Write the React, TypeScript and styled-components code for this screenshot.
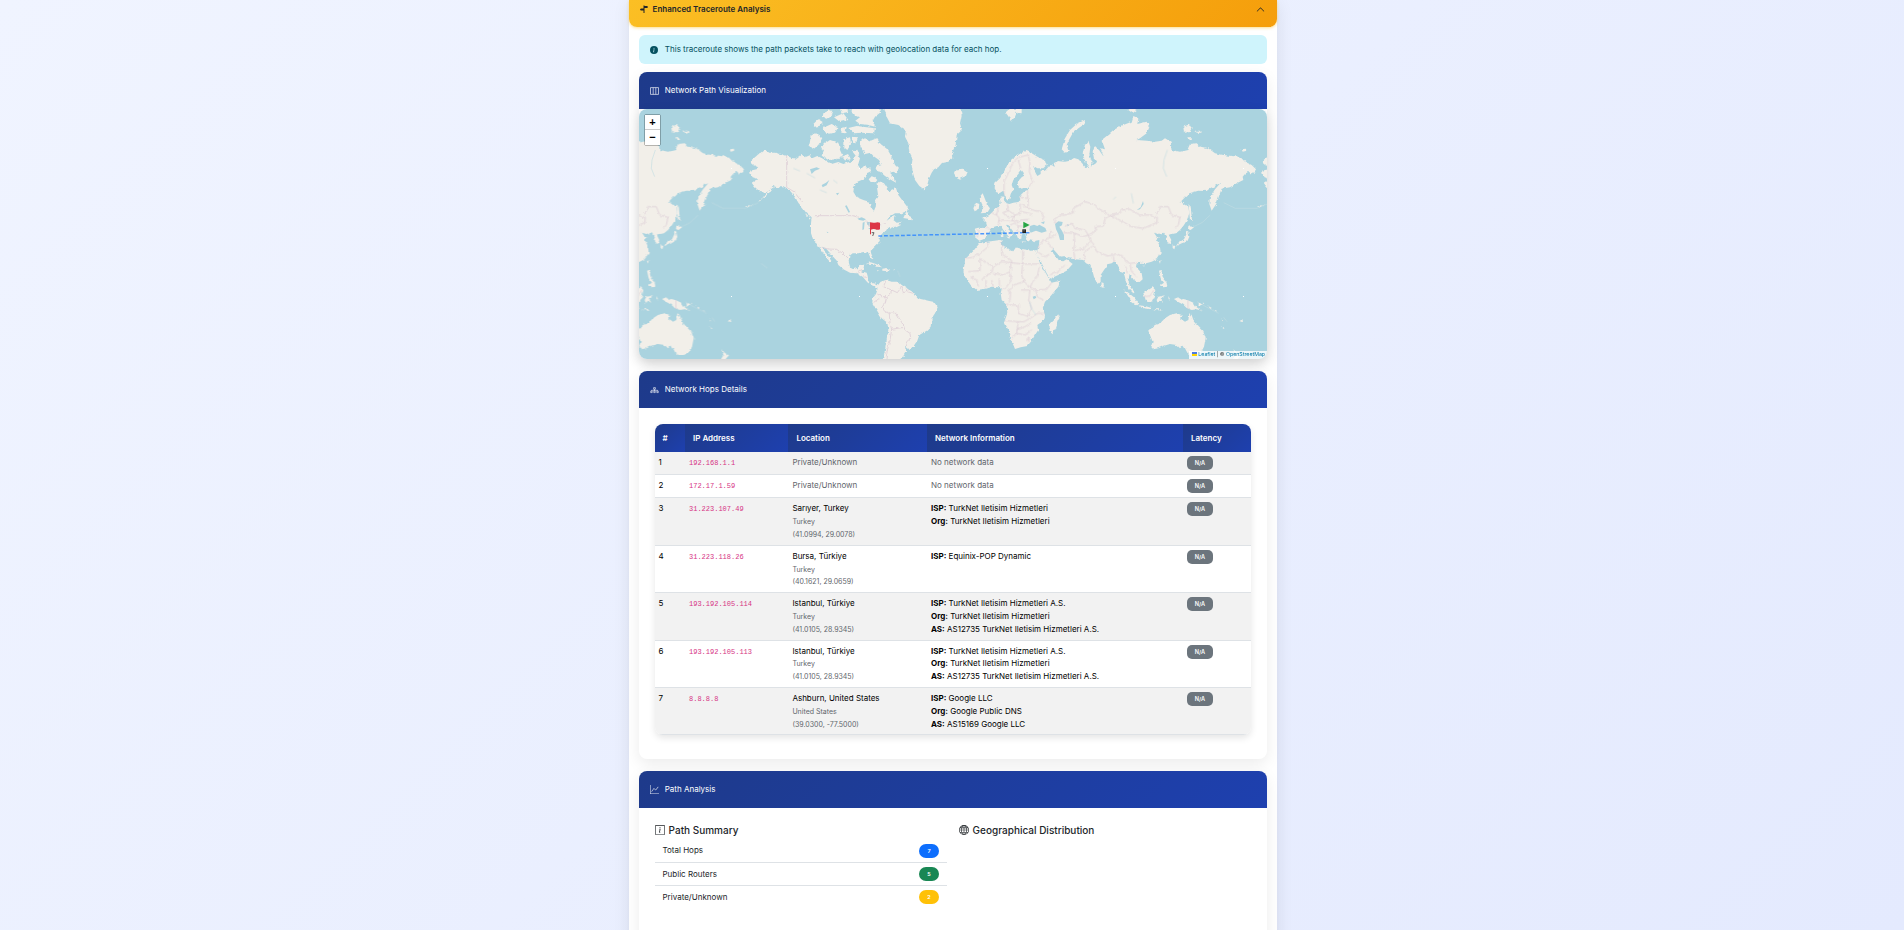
import React from "react";
import styled, { createGlobalStyle } from "styled-components";
import {
  BsChevronUp,
  BsGlobe,
  BsGraphUp,
  BsInfoCircleFill,
  BsInfoSquare,
  BsSignpostSplitFill,
} from "react-icons/bs";

const GlobalStyle = createGlobalStyle`
  *, *::before, *::after { box-sizing: border-box; }
  body {
    margin: 0;
    height: 930px;
    overflow: hidden;
    font-family: Inter, "Liberation Sans", sans-serif;
    font-size: 8px;
    line-height: 12.8px;
    color: #212529;
    background: #e9edfd;
  }
  h5, p { margin: 0; }
`;

const Page = styled.div`
  height: 930px;
  overflow: hidden;
  display: flex;
  justify-content: center;
  padding-left: 2px;
  background: linear-gradient(135deg, #f0f4ff 0%, #e4eafe 100%);
`;

const Panel = styled.main`
  width: 648px;
  height: 960px;
  background: #fff;
  box-shadow: 0 4px 16px rgba(0, 0, 0, 0.09);
`;

const PanelHeader = styled.header`
  height: 27px;
  padding: 0 12.5px 9px 11px;
  display: flex;
  align-items: center;
  border-radius: 0 0 8px 8px;
  background: linear-gradient(135deg, #fbbf24 0%, #f59e0b 100%);
  box-shadow: 0 1px 3px rgba(251, 191, 36, 0.5);
  font-weight: 600;
`;

const PanelTitle = styled.span`
  flex: 1;
  margin-left: 4.6px;
`;

const PanelBody = styled.div`
  padding: 8px 10px 0;
`;

const Notice = styled.div`
  height: 29px;
  padding: 0 11px;
  display: flex;
  align-items: center;
  gap: 6.8px;
  border-radius: 6px;
  background: #cff4fc;
  color: #055160;
`;

const Card = styled.section<{ $height: number; $first?: boolean }>`
  height: ${(p) => p.$height}px;
  border-radius: 8px;
  background: #fff;
  box-shadow: 0 5px 15px rgba(0, 0, 0, 0.08);
  margin-top: ${(p) => (p.$first ? 8 : 12)}px;
`;

const CardHeader = styled.div`
  height: 37px;
  padding: 0 11px;
  display: flex;
  align-items: center;
  gap: 5.7px;
  border-radius: 8px 8px 0 0;
  background: linear-gradient(135deg, #1e3a8a 0%, #1e40af 100%);
  color: #fff;

  svg {
    opacity: 0.85;
  }
`;

const CardBody = styled.div`
  padding: 16px;
`;

const MapFrame = styled.div`
  position: relative;
  height: 250px;
  overflow: hidden;
  border-radius: 8px;
  background: #aad3df;
`;

const MapShadow = styled.div`
  border-radius: 8px;
  box-shadow: 0 4px 12px rgba(0, 0, 0, 0.13);
`;

const MapDrawing = styled.svg`
  display: block;
  width: 628px;
  height: 250px;
`;

const ZoomControl = styled.div`
  position: absolute;
  top: 5px;
  left: 5px;
  width: 17px;
  border: 1px solid rgba(0, 0, 0, 0.25);
  border-radius: 2px;
  background-clip: padding-box;
`;

const ZoomButton = styled.div`
  height: 14px;
  background: #fff;
  color: #000;
  text-align: center;
  font: bold 11px/15px "Liberation Sans", sans-serif;

  & + & {
    height: 16px;
    border-top: 1px solid #ccc;
    line-height: 14px;
  }
`;

const Attribution = styled.div`
  position: absolute;
  right: 0;
  bottom: 0;
  width: 78px;
  height: 8px;
  padding: 0 3px 2px;
  display: flex;
  align-items: center;
  gap: 1.3px;
  background: rgba(255, 255, 255, 0.8);
  color: #333;
  font: 5.25px/6px Inter, sans-serif;
  white-space: nowrap;
`;

const MapLink = styled.span`
  color: #0078a8;
`;

const UkraineFlag = styled.i`
  width: 5px;
  height: 4px;
  flex: none;
  background: linear-gradient(#4c7be1 50%, #ffd500 50%);
`;

const HopTable = styled.table`
  width: 596px;
  table-layout: fixed;
  border-spacing: 0;
  border-radius: 8px;
  overflow: hidden;
  box-shadow: 0 3px 7px rgba(0, 0, 0, 0.1);
`;

const HeadCell = styled.th<{ $width: number }>`
  width: ${(p) => p.$width}px;
  height: 28.2px;
  padding: 0 0 0 8px;
  text-align: left;
  font-weight: 600;
  color: #fff;
  background: linear-gradient(135deg, #1e3a8a 0%, #1e40af 100%);

  &:first-child {
    padding-left: 7.5px;
  }
`;

const HopRow = styled.tr<{ $tall: boolean }>`
  height: ${(p) => (p.$tall ? 47.4 : 23.1)}px;

  &:nth-child(odd) {
    background: #f2f2f2;
  }
`;

const Cell = styled.td`
  padding: 4px 4px 0;
  vertical-align: top;
  border-bottom: 1px solid #dee2e6;
  color: #000;
  white-space: nowrap;

  &:first-child {
    padding-left: 3.4px;
  }
`;

const Address = styled.code`
  font-family: "Liberation Mono", monospace;
  font-size: 7px;
  color: #d63384;
`;

const Muted = styled.span`
  color: #5f666c;
`;

const Line = styled.div`
  height: 12.8px;
`;

const SmallLine = styled(Line)`
  font-size: 7px;
  line-height: 14px;
  color: #5f666c;
`;

const LatencyBadge = styled.div`
  width: 26px;
  height: 14px;
  border-radius: 5px;
  background: #6c757d;
  color: #fff;
  text-align: center;
  font-size: 5.6px;
  font-weight: 600;
  line-height: 14px;
`;

const Columns = styled.div`
  display: grid;
  grid-template-columns: 292px 292px;
  gap: 12px;
`;

const Heading = styled.h5`
  display: flex;
  align-items: center;
  gap: 4px;
  height: 12px;
  margin: 0 0 3.4px -0.4px;
  font-size: 10px;
  font-weight: 500;
  line-height: 12px;
`;

const StatRow = styled.div`
  height: 23px;
  padding: 0 8px 0 7.5px;
  display: flex;
  align-items: center;
  justify-content: space-between;

  & + & {
    border-top: 1px solid #dee2e6;
  }
`;

const CountBadge = styled.span<{ $color: string }>`
  width: 20px;
  height: 14px;
  border-radius: 7px;
  background: ${(p) => p.$color};
  color: #fff;
  text-align: center;
  font-size: 5.4px;
  font-weight: 600;
  line-height: 14px;
`;

const MapIcon = () => (
  <svg width="9" height="8" viewBox="0 0 9 8" fill="none" stroke="currentColor" strokeWidth="0.75">
    <path d="M0.5,0.6 H8.5 V7.4 H0.5Z M3.2,0.6 V7.4 M5.8,0.6 V7.4" />
  </svg>
);

const HopsIcon = () => (
  <svg width="9" height="8" viewBox="0 0 9 8" fill="none" stroke="currentColor" strokeWidth="0.7">
    <path d="M3.6,1.6 h1.8 v1.6 h-1.8Z M4.5,3.2 V5 M1.4,5 V4.3 H7.6 V5 M0.7,5.2 h1.5 v1.4 h-1.5Z M3.75,5.2 h1.5 v1.4 h-1.5Z M6.8,5.2 h1.5 v1.4 h-1.5Z" />
  </svg>
);

interface Hop {
  ip: string;
  place?: string[];
  info?: [string, string][];
}

const turknet = "TurkNet Iletisim Hizmetleri";

const hops: Hop[] = [
  { ip: "192.168.1.1" },
  { ip: "172.17.1.59" },
  {
    ip: "31.223.107.49",
    place: ["Sarıyer, Turkey", "Turkey", "(41.0994, 29.0078)"],
    info: [["ISP:", turknet], ["Org:", turknet]],
  },
  {
    ip: "31.223.118.26",
    place: ["Bursa, Türkiye", "Turkey", "(40.1621, 29.0659)"],
    info: [["ISP:", "Equinix-POP Dynamic"]],
  },
  {
    ip: "193.192.105.114",
    place: ["Istanbul, Türkiye", "Turkey", "(41.0105, 28.9345)"],
    info: [["ISP:", `${turknet} A.S.`], ["Org:", turknet], ["AS:", `AS12735 ${turknet} A.S.`]],
  },
  {
    ip: "193.192.105.113",
    place: ["Istanbul, Türkiye", "Turkey", "(41.0105, 28.9345)"],
    info: [["ISP:", `${turknet} A.S.`], ["Org:", turknet], ["AS:", `AS12735 ${turknet} A.S.`]],
  },
  {
    ip: "8.8.8.8",
    place: ["Ashburn, United States", "United States", "(39.0300, -77.5000)"],
    info: [["ISP:", "Google LLC"], ["Org:", "Google Public DNS"], ["AS:", "AS15169 Google LLC"]],
  },
];

const columns: [string, number][] = [
  ["#", 30],
  ["IP Address", 103.4],
  ["Location", 138.6],
  ["Network Information", 256],
  ["Latency", 68],
];

/* One world copy is 1536 units wide; three units make one screen pixel. */
const WORLD = 1536;

const americas = [
  // mainland North America
  "M358,185 L375,172 385,163 395,158 405,150 418,158 435,158 455,163 470,167 485,174 500,176 515,165 525,172 540,166 548,174 562,168 575,174 590,182 605,192 625,186 640,192 655,187 668,182 680,165 690,175 684,195 692,208 705,195 715,210 708,232 695,240 682,245 672,262 670,275 680,292 700,300 718,305 722,322 732,332 738,318 735,305 745,290 742,270 740,252 748,244 762,250 770,262 778,275 790,270 797,262 805,285 820,305 833,322 832,332 815,340 795,340 778,350 770,362 785,352 795,348 790,360 800,368 815,366 800,378 785,384 775,380 768,392 755,402 748,415 750,425 740,435 730,445 722,452 724,462 730,475 726,478 720,470 715,458 700,456 685,460 668,460 658,468 656,485 660,500 672,508 684,504 688,495 703,494 700,508 694,514 710,518 714,532 714,542 722,550 735,550 745,556 740,562 725,556 712,547 698,530 680,520 660,518 640,508 625,495 620,482 605,465 590,448 578,440 584,454 596,470 606,486 600,486 584,466 570,445 562,430 550,420 543,400 543,370 545,352 530,340 518,325 505,308 495,290 480,272 460,262 440,262 430,255 420,268 405,278 390,275 375,262 365,248 378,240 388,238 368,232 362,222 360,212 380,208 385,200 370,196Z",
  // Aleutians
  "M440,258 L425,268 415,282 395,297 412,276 425,262Z M385,303 l12,-6 -8,7Z M345,322 l25,-10 -20,11Z",
  // South America
  "M742,558 L752,545 768,540 785,545 805,545 815,555 835,568 852,578 862,595 885,600 912,606 923,622 915,640 905,655 902,680 890,692 868,705 862,722 848,742 835,748 825,740 828,755 820,768 808,780 758,780 765,750 770,720 775,690 772,668 755,655 740,630 727,608 728,595 738,582 742,570Z",
  // Greenland
  "M762,20 L990,20 995,45 990,70 996,90 980,105 977,135 965,160 967,175 955,185 935,190 925,202 912,208 905,218 897,235 890,262 882,268 868,258 855,240 848,215 845,195 848,175 838,155 835,130 825,110 828,90 805,75 780,70 770,50Z",
  // Arctic islands
  "M690,122 L705,115 722,122 740,115 752,132 772,148 785,170 795,195 808,208 800,220 790,215 780,218 795,235 798,248 780,238 765,228 750,215 735,212 740,198 755,195 747,180 730,168 722,158 705,162 692,142Z",
  "M582,132 L600,120 625,128 630,150 638,168 620,178 595,180 575,167 582,150 572,145Z",
  "M542,108 L555,100 577,114 565,135 550,148 538,135Z",
  "M640,118 L660,112 663,132 652,150 640,140Z M668,110 L684,112 678,130 668,128Z M636,170 l18,-8 8,14 -16,6Z M668,155 l14,-6 6,14 -10,6Z",
  "M655,84 L680,78 735,85 732,100 695,98 672,100Z",
  "M658,27 L748,20 750,38 735,50 728,62 735,80 712,74 690,72 676,62 690,52 675,45Z",
  "M550,72 L565,58 578,66 568,78 552,80Z M578,84 L605,72 625,82 615,98 590,102Z M580,40 L600,30 608,42 590,56 578,52Z M612,52 L640,40 655,60 630,66Z M632,84 L650,80 646,100 634,98Z M630,28 l22,-4 2,12 -18,4Z",
  "M716,238 L728,226 742,240 735,250 722,246Z M706,208 l14,-6 4,14 -12,6Z",
  // Newfoundland, Vancouver
  "M820,354 L828,336 836,338 838,348 845,352 845,361 834,356Z M526,340 l14,12 2,6 -14,-12Z M795,378 l14,-6 4,3 -14,7Z",
  // Caribbean
  "M708,491 L722,487 740,493 757,502 742,500 725,492Z M757,506 L772,504 781,510 768,513 757,512Z M738,510 l10,2 -8,2Z M789,508 l8,1 -7,2Z",
];

const oldWorld = [
  // Eurasia
  "M75,412 L78,398 74,386 85,383 108,384 111,378 108,366 100,358 95,352 108,350 118,345 125,338 135,328 148,318 152,310 150,298 152,290 160,288 162,300 165,308 178,312 190,308 205,306 212,300 208,290 215,282 222,275 235,268 232,262 212,266 205,262 203,245 215,232 222,220 215,210 205,222 190,240 185,255 190,268 182,282 178,298 170,302 165,290 160,272 148,280 138,276 134,262 136,248 150,235 162,215 172,195 185,178 200,168 215,158 230,153 245,160 265,172 285,180 290,195 280,205 262,205 250,198 255,215 262,228 272,222 272,212 285,212 300,195 315,200 310,190 325,183 345,185 360,182 372,174 385,178 395,188 408,203 418,205 408,190 398,160 405,135 415,122 421,140 418,165 428,190 422,200 440,188 432,175 428,155 435,138 447,150 462,172 450,145 465,148 455,120 470,108 490,90 520,75 545,65 550,48 565,55 562,72 590,65 598,82 590,100 570,115 560,120 590,122 615,125 635,122 645,115 662,125 665,150 690,155 712,150 720,132 740,130 752,140 775,145 795,160 820,165 845,168 870,170 885,185 905,195 918,208 910,222 895,215 885,222 878,230 880,240 860,250 840,262 815,266 808,285 800,310 785,332 778,312 780,290 795,268 812,248 800,255 780,265 770,273 745,272 718,280 705,292 692,305 705,315 715,320 718,340 710,362 700,378 690,390 678,400 656,404 664,420 660,432 652,430 650,412 640,398 625,402 612,398 620,410 630,412 620,418 630,440 632,460 620,478 605,485 588,490 575,488 560,490 558,500 575,520 578,538 565,550 555,545 545,530 536,522 533,535 540,560 554,576 550,580 535,565 528,545 522,520 510,515 505,498 495,482 485,490 475,492 462,510 452,525 452,545 443,555 432,530 425,505 420,495 408,490 400,480 375,478 355,475 345,468 330,470 310,448 302,450 318,470 328,482 340,484 350,478 368,492 350,512 325,525 300,536 290,520 275,490 260,465 263,448 267,434 268,420 250,424 232,420 226,404 232,396 222,398 215,404 214,416 205,418 200,405 188,392 175,375 168,374 175,388 188,400 180,412 172,405 160,390 152,378 140,378 128,382 118,395 108,412 100,418 88,422Z",
  // Africa
  "M90,428 L112,425 150,420 157,422 152,438 170,445 190,454 198,442 218,448 245,452 262,450 260,462 270,490 285,515 298,538 305,548 330,542 325,560 300,590 285,605 278,625 285,645 283,660 262,675 265,690 255,705 245,722 232,738 212,742 195,747 190,735 180,715 175,690 163,665 172,640 170,615 155,600 152,580 155,568 145,562 125,560 105,566 80,570 62,555 45,530 40,515 44,490 48,475 68,455 80,440Z",
  "M325,643 L328,655 318,685 308,702 298,695 300,670 312,658Z",
  // British Isles, Iceland, Svalbard
  "M88,292 L98,280 104,295 112,315 120,325 112,338 92,340 102,325 95,310Z M70,325 L78,308 88,312 86,328 74,334Z",
  "M12,220 L22,208 40,206 53,215 48,228 30,236 18,230Z",
  "M165,35 L185,26 215,26 215,40 200,38 195,50 183,65 176,50Z",
  // Novaya Zemlya and the Arctic coast
  "M335,148 L345,115 360,90 380,72 405,60 404,72 385,85 368,100 358,118 350,135 356,155 345,158Z",
  "M535,30 L545,22 560,30 548,40Z M700,80 L715,74 728,84 722,96 702,98Z M732,92 l20,0 3,6 -14,0Z M712,112 l10,0 4,8 -10,0Z M875,148 l12,-2 3,6 -12,3Z",
  // Mediterranean islands
  "M152,405 l8,-2 0,8 -7,0Z M153,393 l5,-2 -1,9Z M168,410 l12,0 -2,6Z M212,424 l14,1 -8,3Z M248,424 l10,-3 -5,6Z",
  // Indian Ocean and Indonesia
  "M455,545 L462,555 460,563 454,562Z M520,567 L535,578 552,592 565,610 560,616 545,605 532,585Z M562,616 L585,618 605,624 602,628 580,624Z M580,580 L595,570 608,562 616,570 612,590 605,605 588,602Z",
  "M625,590 L645,586 632,596 640,608 628,602 624,612 620,600Z M610,628 l20,0 8,3 -20,0Z M655,588 l5,10 -4,0Z",
  "M672,597 L685,592 690,600 700,597 712,600 730,608 738,620 755,632 740,628 725,630 710,624 700,614 685,606Z M745,612 l15,-4 3,2 -14,7Z M775,615 l10,8 -4,0Z M790,626 l12,8 -4,0Z M815,655 l6,8 -4,0Z M868,663 l12,-5 -4,8Z M812,678 l12,8 -4,0Z",
  "M627,512 L634,510 638,530 650,545 652,560 640,562 632,555 642,548 632,535Z M627,484 l5,-3 -2,10Z M577,494 l8,0 -3,6Z",
  // Australia and New Zealand
  "M598,688 L615,675 632,668 645,655 660,645 680,640 695,645 690,655 705,665 715,660 718,640 725,645 732,665 745,680 760,695 767,715 762,740 750,762 735,765 722,765 712,758 705,745 700,736 690,745 680,735 660,732 640,738 625,745 610,748 603,740 608,725 600,705Z",
  "M850,748 L862,760 873,766 860,780 850,780 858,768Z",
  // Sakhalin and Japan
  "M716,314 L722,316 724,340 726,362 720,360 718,340Z M715,378 L722,375 732,382 722,390 714,388Z M714,392 L718,410 712,424 695,430 678,438 685,428 702,418Z M668,436 l8,2 -3,10 -5,-4Z",
];

const oldWorldWaters = [
  // Black Sea, Azov, Caspian, Aral, Baikal
  "M240,378 L252,374 262,378 268,374 286,384 290,394 275,398 258,392 242,398 238,390Z M272,368 l12,-4 -2,8Z",
  "M315,372 L325,364 338,366 336,376 328,380 336,392 342,405 342,420 330,420 325,402 318,388Z",
  "M352,372 l5,4 -4,3Z M560,330 L572,322 579,303 581,312 570,328Z",
  // Lake Victoria
  "M248,590 l8,-3 3,6 -8,5Z",
];

const americanWaters = [
  // Great Lakes
  "M682,356 L695,352 708,358 700,362 688,360Z M698,368 L704,365 702,388 697,390Z M710,366 L720,366 718,378 712,374Z M714,386 l18,-8 3,3 -14,7Z M730,374 l12,-3 -3,5Z",
  // Canadian lakes
  "M540,208 L560,202 570,206 555,212 545,222Z M575,255 L588,248 598,240 590,256 578,262Z M645,318 L650,316 660,336 656,338Z M618,280 l10,-2 -6,8Z M590,395 l6,2 -4,2Z",
];

const borders = [
  // North America
  "M470,167 L470,262 480,268 492,275 505,292 518,306 M550,347 L668,347 685,352 M710,362 L722,385 745,375 768,372 M575,442 L595,447 620,448 635,458 652,475 M680,518 L690,510 700,516 M700,530 L712,532",
  // South America
  "M768,542 L760,560 785,570 782,582 770,590 M785,570 L802,578 815,560 M815,560 L820,578 832,575 835,568 M832,575 L850,580 M742,582 L755,590 770,590 765,610 755,622 765,635 778,640 795,638 808,655 820,675 825,690 840,700 842,715 830,725 826,738 M778,640 L780,670 785,688 780,720 772,750 768,777 M785,688 L820,682 M730,608 L748,595",
];

const oldBorders = [
  // Africa
  "M112,425 L115,440 90,460 68,472 48,475 M90,475 L130,500 155,485 218,492 268,492 M90,475 L90,512 55,515 M130,500 L125,520 108,525 95,540 M155,425 L155,462 185,482 M218,450 L218,492 M218,492 L215,525 222,545 240,562 M185,482 L180,515 160,525 130,520 M180,515 L185,540 168,562 158,568 M222,545 L190,555 180,570 M268,500 L262,530 248,545 240,562 258,570 290,568 305,548 M258,570 L262,590 280,600 M172,570 L182,575 180,600 170,612 M215,570 L240,570 236,600 245,625 235,650 205,640 205,615 172,615 M165,662 L205,665 222,665 240,655 262,640 285,640 M205,665 L200,700 185,715 M200,690 L225,680 245,668 M200,700 L225,705 245,690 M125,540 L130,560 M108,540 L108,562 M62,530 L80,540 85,560 M148,535 L148,560 M230,720 l8,-6 -2,10 -6,-2",
  // Europe
  "M85,388 L82,412 M110,384 L125,388 M125,338 L140,345 148,355 145,370 150,376 M145,322 L140,345 M172,312 L175,332 158,338 170,350 M175,332 L195,345 212,340 210,312 M170,350 L195,350 M195,345 L188,362 205,368 212,360 238,358 M212,312 L235,325 248,330 M215,335 L245,342 M248,330 L272,335 282,350 275,362 M145,362 L160,360 172,360 188,362 M180,375 L195,370 205,378 232,380 M205,378 L200,392 212,398 M162,285 L162,245 172,225 190,185 205,172 222,168 235,165 M235,165 L240,190 238,215 248,245 235,262 M208,292 L232,295 M232,270 L235,325 M205,180 L212,205",
  // Asia
  "M310,360 L330,345 345,345 370,338 370,325 405,305 428,312 445,325 470,340 480,348 M312,358 L318,370 M345,378 L365,370 375,385 405,390 415,405 440,392 435,380 460,378 465,355 482,346 M482,346 L505,358 545,380 580,385 620,368 622,355 605,345 570,345 540,328 515,330 505,342 482,346 M620,345 L630,320 655,320 665,345 690,352 685,375 675,385 M415,405 L420,420 430,432 440,455 475,468 500,462 520,470 528,485 540,490 560,488 M340,398 L375,400 400,410 415,405 M372,400 L375,430 370,452 375,478 M375,452 L402,445 420,425 M405,478 L400,458 428,438 M262,445 L280,420 305,412 320,402 M285,420 L312,448 M262,455 L285,470 300,462 M298,412 L300,395 310,395 M300,525 L330,510 345,495 M490,468 L492,485 M540,492 L545,515 560,530 M528,500 L532,520 M582,590 L600,588 612,570 M714,600 L714,628",
];

const Shapes = ({ paths }: { paths: string[] }) => (
  <>
    {paths.map((d) => (
      <path key={d} d={d} />
    ))}
  </>
);

const World = () => (
  <g id="world">
    <g fill="#f2efe9" filter="url(#coast)">
      <Shapes paths={americas} />
      <g transform="translate(960 0)">
        <Shapes paths={oldWorld} />
      </g>
    </g>
    <g fill="#aad3df">
      <Shapes paths={americanWaters} />
      <g transform="translate(960 0)">
        <Shapes paths={oldWorldWaters} />
      </g>
    </g>
    <g fill="none" stroke="#d6c3d0" strokeOpacity="0.6" strokeWidth="3" strokeLinejoin="round" filter="url(#coast)">
      <Shapes paths={borders} />
      <g transform="translate(960 0)">
        <Shapes paths={oldBorders} />
      </g>
    </g>
    <path
      d="M1612,150 L1602,180 1600,205 1610,230 M1199,605 L1204,625 1218,645 M490,205 l20,8 M530,220 l25,14 M570,270 l20,8 M610,240 l12,10 M1450,298 l8,-8 M1504,280 l6,30"
      fill="none"
      stroke="#aad3df"
      strokeWidth="2"
      strokeOpacity="0.6"
    />
    <path
      d="M245,308 L280,325 345,325 385,308 M155,380 L180,368 205,345 M165,605 L195,622 230,640 M245,652 L255,665 M393,490 L412,504 M803,512 L810,530"
      fill="none"
      stroke="#f2efe9"
      strokeWidth="2"
      strokeOpacity="0.3"
    />
  </g>
);

const PathMap = () => (
  <MapDrawing viewBox="27 27 1884 750" preserveAspectRatio="none">
    <defs>
      <filter id="coast" x="-5%" y="-5%" width="110%" height="110%">
        <feTurbulence type="fractalNoise" baseFrequency="0.09" numOctaves="2" seed="4" />
        <feDisplacementMap in="SourceGraphic" scale="10" xChannelSelector="R" yChannelSelector="G" />
      </filter>
    </defs>
    <World />
    <use href="#world" x={-WORLD} />
    <use href="#world" x={WORLD} />
    <g fill="#fff">
      {[304, 688, 1072, 1456, 1840].map((x) => (
        <React.Fragment key={x}>
          <rect x={x - 1} y="204" width="3" height="3" />
          <rect x={x - 1} y="588" width="3" height="3" />
        </React.Fragment>
      ))}
    </g>
    <path
      d="M745,408 L1196,398 1196,404"
      fill="none"
      stroke="#3388ff"
      strokeWidth="4.5"
      strokeOpacity="0.85"
      strokeDasharray="11.5 5.5"
    />
    <path d="M720,367 q8,2 15,1 q8,-2 15,0 v20 q-8,3 -14,0 q-6,-2 -13,1 v14 h-3Z" fill="#dc3545" />
    <path d="M725,398 h7 l-4,10" fill="none" stroke="#333" strokeWidth="2.2" />
    <path d="M1180,365 L1199,375 1180,385Z" fill="#28a745" />
    <path d="M1177,388 h11 v11 h-11Z" fill="#222" />
    <rect x="1180.5" y="391" width="3" height="3" fill="#999" />
  </MapDrawing>
);

export default function App() {
  return (
    <>
      <GlobalStyle />
      <Page>
        <Panel>
          <PanelHeader>
            <BsSignpostSplitFill size={8} />
            <PanelTitle>Enhanced Traceroute Analysis</PanelTitle>
            <BsChevronUp size={9} />
          </PanelHeader>
          <PanelBody>
            <Notice>
              <BsInfoCircleFill size={8} />
              <span>This traceroute shows the path packets take to reach with geolocation data for each hop.</span>
            </Notice>

            <Card $height={287} $first>
              <CardHeader>
                <MapIcon />
                Network Path Visualization
              </CardHeader>
              <MapShadow>
                <MapFrame>
                  <PathMap />
                  <ZoomControl>
                    <ZoomButton>+</ZoomButton>
                    <ZoomButton>−</ZoomButton>
                  </ZoomControl>
                  <Attribution>
                    <UkraineFlag />
                    <MapLink>Leaflet</MapLink>
                    <span>| ©</span>
                    <MapLink>OpenStreetMap</MapLink>
                  </Attribution>
                </MapFrame>
              </MapShadow>
            </Card>

            <Card $height={388}>
              <CardHeader>
                <HopsIcon />
                Network Hops Details
              </CardHeader>
              <CardBody>
                <HopTable>
                  <thead>
                    <tr>
                      {columns.map(([label, width]) => (
                        <HeadCell key={label} $width={width}>
                          {label}
                        </HeadCell>
                      ))}
                    </tr>
                  </thead>
                  <tbody>
                    {hops.map((hop, i) => (
                      <HopRow key={hop.ip} $tall={!!hop.place}>
                        <Cell>{i + 1}</Cell>
                        <Cell>
                          <Address>{hop.ip}</Address>
                        </Cell>
                        <Cell>
                          {hop.place ? (
                            <>
                              <Line>{hop.place[0]}</Line>
                              <SmallLine>{hop.place[1]}</SmallLine>
                              <SmallLine>{hop.place[2]}</SmallLine>
                            </>
                          ) : (
                            <Muted>Private/Unknown</Muted>
                          )}
                        </Cell>
                        <Cell>
                          {hop.info ? (
                            hop.info.map(([key, value]) => (
                              <Line key={key}>
                                <strong>{key}</strong> {value}
                              </Line>
                            ))
                          ) : (
                            <Muted>No network data</Muted>
                          )}
                        </Cell>
                        <Cell>
                          <LatencyBadge>N/A</LatencyBadge>
                        </Cell>
                      </HopRow>
                    ))}
                  </tbody>
                </HopTable>
              </CardBody>
            </Card>

            <Card $height={200}>
              <CardHeader>
                <BsGraphUp size={9} />
                Path Analysis
              </CardHeader>
              <CardBody>
                <Columns>
                  <div>
                    <Heading>
                      <BsInfoSquare size={10} />
                      Path Summary
                    </Heading>
                    <StatRow>
                      Total Hops <CountBadge $color="#0d6efd">7</CountBadge>
                    </StatRow>
                    <StatRow>
                      Public Routers <CountBadge $color="#198754">5</CountBadge>
                    </StatRow>
                    <StatRow>
                      Private/Unknown <CountBadge $color="#ffc107">2</CountBadge>
                    </StatRow>
                  </div>
                  <div>
                    <Heading>
                      <BsGlobe size={10} />
                      Geographical Distribution
                    </Heading>
                  </div>
                </Columns>
              </CardBody>
            </Card>
          </PanelBody>
        </Panel>
      </Page>
    </>
  );
}
